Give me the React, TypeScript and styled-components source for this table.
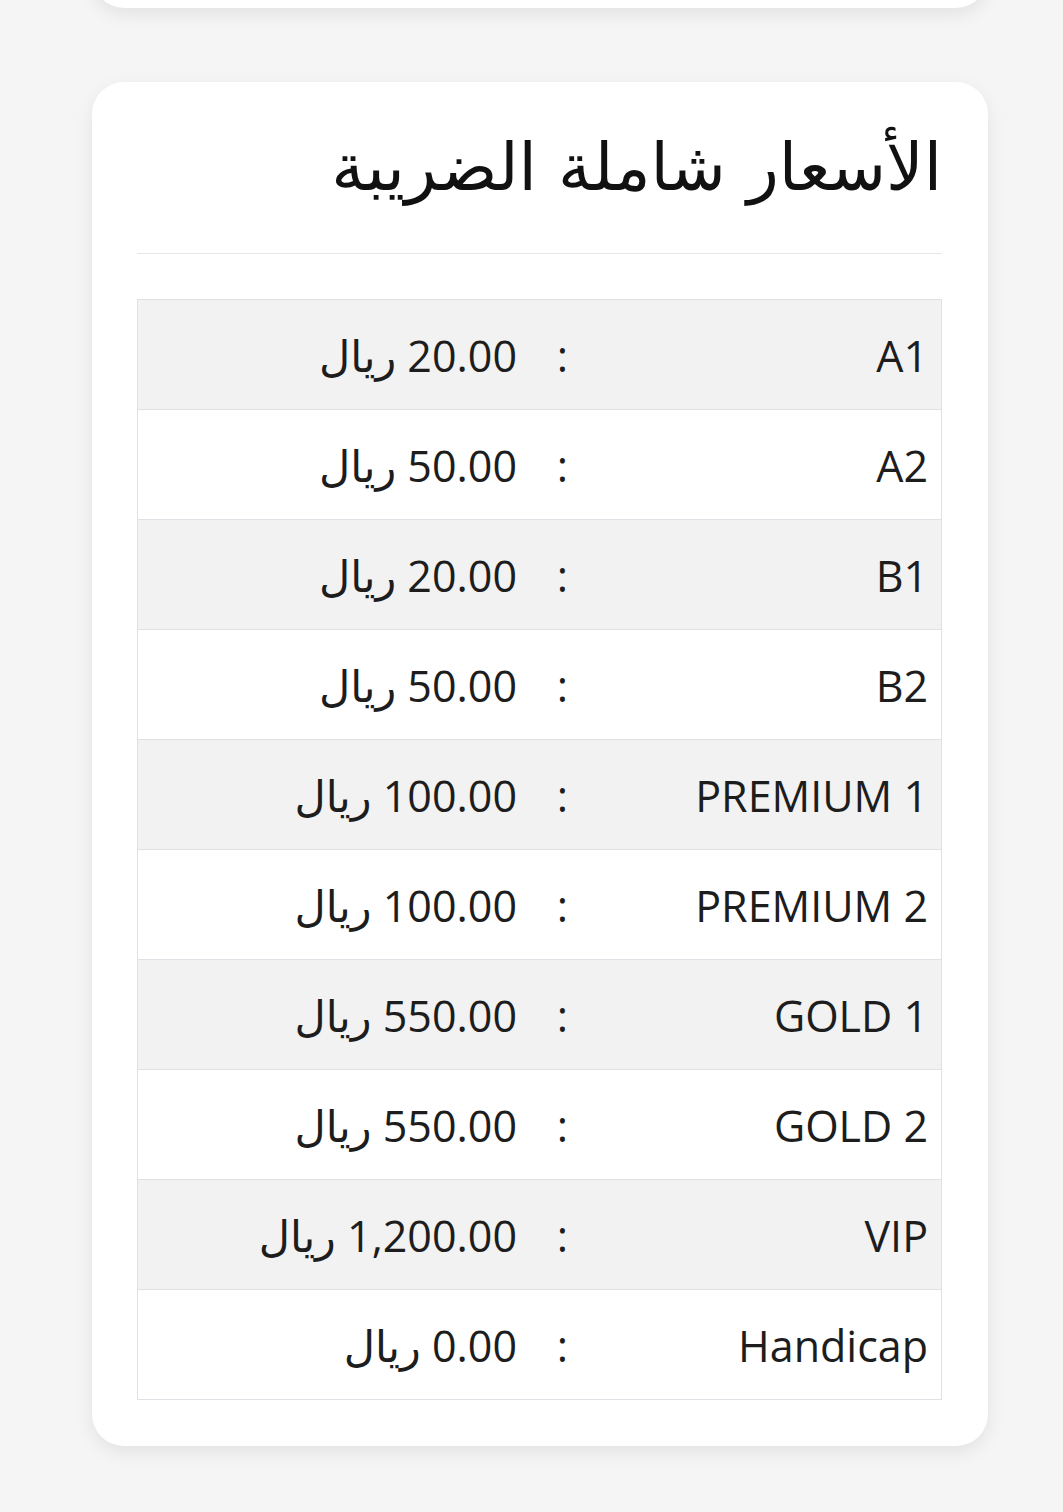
import styled, { createGlobalStyle } from "styled-components";

// style
const GlobalStyle = createGlobalStyle`
  html, body {
    margin: 0;
    padding: 0;
    background: #f5f5f5;
  }
  body {
    font-family: "Open Sans", "DejaVu Sans", sans-serif;
    color: #1d1d1d;
  }
`;
const Page = styled.main`
  display: flex;
  flex-direction: column;
  gap: 74px;
  width: 896px;
  margin: -60px 0 0 92px;
  padding-bottom: 66px;
`;
const Card = styled.section<{ $empty?: boolean }>`
  box-sizing: border-box;
  background: #fff;
  border-radius: 32px;
  box-shadow: 0 6px 18px rgba(0, 0, 0, 0.08);
  padding: ${(p) => (p.$empty ? "0" : "46px 46px 46px 45px")};
  height: ${(p) => (p.$empty ? "68px" : "auto")};
  direction: rtl;
`;
const Title = styled.h2`
  margin: 0;
  font-family: "DejaVu Sans", sans-serif;
  font-weight: 400;
  font-size: 66px;
  line-height: 80px;
  color: #111;
  padding-bottom: 45px;
  border-bottom: 1px solid #e6e6e6;
`;
const PriceTable = styled.div`
  margin-top: 45px;
  border: 1px solid #dee2e6;
  border-top: none;
`;
const Row = styled.div<{ $striped: boolean }>`
  display: grid;
  grid-template-columns: 361px 35px 1fr;
  align-items: center;
  box-sizing: border-box;
  height: 110px;
  padding-top: 2px;
  background: ${(p) => (p.$striped ? "#f2f2f2" : "#fff")};
  border-top: 1px solid #dee2e6;
  font-size: 43px;
`;
const Name = styled.div`
  text-align: right;
  padding-right: 13px;
`;
const Colon = styled.div`
  text-align: center;
`;
const Price = styled.div`
  text-align: right;
  padding-right: 28px;
`;

// content
const prices = [
  { name: "A1", value: "20.00" },
  { name: "A2", value: "50.00" },
  { name: "B1", value: "20.00" },
  { name: "B2", value: "50.00" },
  { name: "PREMIUM 1", value: "100.00" },
  { name: "PREMIUM 2", value: "100.00" },
  { name: "GOLD 1", value: "550.00" },
  { name: "GOLD 2", value: "550.00" },
  { name: "VIP", value: "1,200.00" },
  { name: "Handicap", value: "0.00" },
];

const App = () => {
  return (
    <>
      <GlobalStyle />
      <Page>
        <Card $empty />
        <Card>
          <Title>الأسعار شاملة الضريبة</Title>
          <PriceTable>
            {prices.map((item, i) => (
              <Row key={item.name} $striped={i % 2 === 0}>
                <Name dir="ltr">{item.name}</Name>
                <Colon>:</Colon>
                <Price>{item.value} ريال</Price>
              </Row>
            ))}
          </PriceTable>
        </Card>
      </Page>
    </>
  );
};

export default App;
